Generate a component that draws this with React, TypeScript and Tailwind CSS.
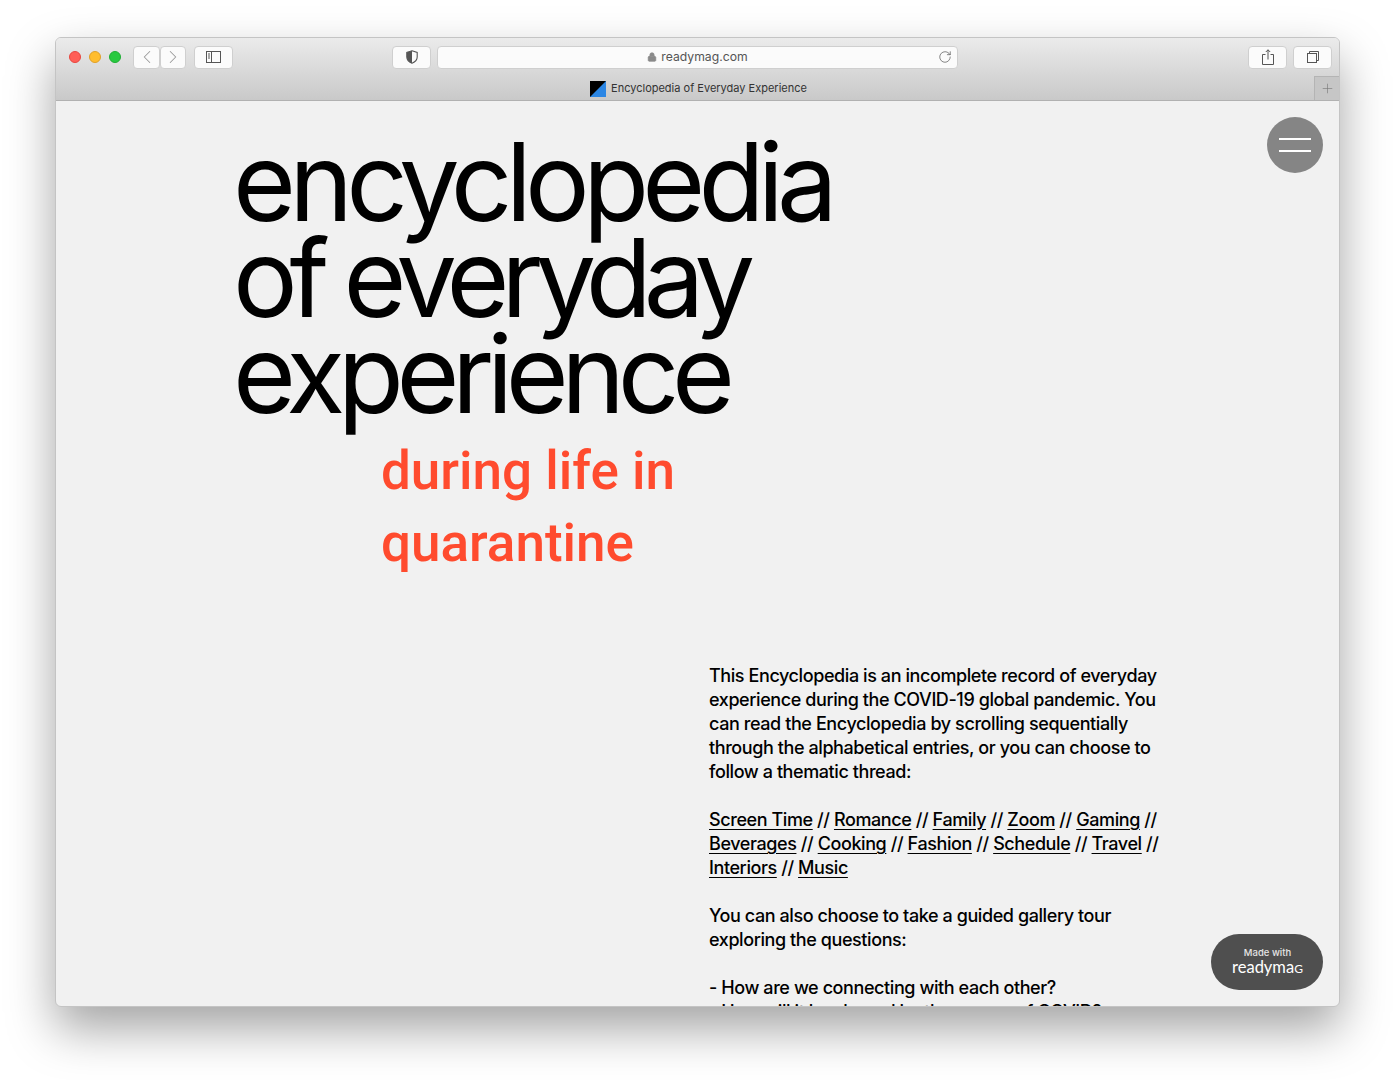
import { ChevronLeft, ChevronRight, Lock, Plus, RotateCw } from 'lucide-react'

const threads = [
  ['Screen Time', 'Romance', 'Family', 'Zoom', 'Gaming'],
  ['Beverages', 'Cooking', 'Fashion', 'Schedule', 'Travel'],
  ['Interiors', 'Music'],
]

function ToolButton({ className, children }: { className: string; children: React.ReactNode }) {
  return (
    <div className={`flex h-[23px] items-center justify-center rounded-[4px] border border-[#cfcfcf] bg-[#fbfbfb] ${className}`}>
      {children}
    </div>
  )
}

export default function App() {
  return (
    <div className="h-[1080px] overflow-hidden bg-white pl-[55px] pr-[55px] pt-[37px] font-['Inter',sans-serif]">
      <div className="flex h-[970px] flex-col overflow-hidden rounded-[6px] border border-[#c4c4c4] bg-[#f1f1f1] shadow-[0_22px_48px_rgba(0,0,0,0.36)]">
        {/* toolbar */}
        <div className="h-[63px] shrink-0 border-b border-[#b1b1b1] bg-gradient-to-b from-[#ebebeb] to-[#c9c9c9]">
          <div className="flex h-[38px] items-center pl-[13px] pr-[7px]">
            <div className="flex gap-[8px]">
              <span className="h-[12px] w-[12px] rounded-full border border-[#e8463f] bg-[#ff5f57]" />
              <span className="h-[12px] w-[12px] rounded-full border border-[#e0a028] bg-[#ffbd2e]" />
              <span className="h-[12px] w-[12px] rounded-full border border-[#1fae33] bg-[#28c940]" />
            </div>
            <ToolButton className="ml-[12px] w-[27px]">
              <ChevronLeft size={22} strokeWidth={1.1} className="text-[#9a9a9a]" />
            </ToolButton>
            <ToolButton className="w-[26px]">
              <ChevronRight size={22} strokeWidth={1.1} className="text-[#9a9a9a]" />
            </ToolButton>
            <ToolButton className="ml-[8px] w-[39px]">
              <svg width="15" height="12" viewBox="0 0 15 12" fill="none" stroke="#555" strokeWidth="1">
                <rect x="0.5" y="0.5" width="14" height="11" />
                <path d="M5.5 0.5v11M2 3h2M2 5h2M2 7h2" />
              </svg>
            </ToolButton>
            <ToolButton className="ml-[159px] w-[39px]">
              <svg width="12" height="14" viewBox="0 0 12 14">
                <path d="M6 0.8 11.2 2.4V7c0 3-2.2 5-5.2 6.2C3 12 0.8 10 0.8 7V2.4Z" fill="none" stroke="#555" strokeWidth="1.1" />
                <path d="M6 0.8V13.2C3 12 0.8 10 0.8 7V2.4Z" fill="#555" />
              </svg>
            </ToolButton>
            <ToolButton className="relative ml-[6px] w-[521px]">
              <div className="flex items-center gap-[4px] pt-[1px] text-[12.2px] text-[#555]">
                <Lock size={10} fill="#8a8a8a" className="text-[#8a8a8a]" />
                <span>readymag.com</span>
              </div>
              <RotateCw size={14} strokeWidth={1.2} className="absolute right-[5px] top-[3px] text-[#555]" />
            </ToolButton>
            <div className="flex-1" />
            <ToolButton className="w-[39px]">
              <svg width="12" height="16" viewBox="0 0 12 16" fill="none" stroke="#555" strokeWidth="1">
                <path d="M3.5 5.5H.5v10h11v-10H8.5M6 10.5V.8M3.8 3 6 .8 8.2 3" />
              </svg>
            </ToolButton>
            <ToolButton className="ml-[6px] w-[39px]">
              <svg width="12" height="12" viewBox="0 0 12 12" fill="none" stroke="#555" strokeWidth="1">
                <rect x="0.5" y="2.5" width="9" height="9" />
                <path d="M2.5 2.5V.5h9v9h-2" />
              </svg>
            </ToolButton>
          </div>
          <div className="flex h-[24px]">
            <div className="flex flex-1 items-center justify-center gap-[5px] pl-[27px] pt-[1px] text-[11px] text-[#333]">
              <svg width="16" height="16" viewBox="0 0 16 16" className="shrink-0">
                <rect width="16" height="16" fill="#2b86e4" />
                <path d="M0 0h16L0 16Z" fill="#000" />
              </svg>
              <span>Encyclopedia of Everyday Experience</span>
            </div>
            <div className="flex w-[25px] items-center justify-center border-l border-t border-[#b4b4b4] bg-[#c6c6c6]">
              <Plus size={15} strokeWidth={1} className="text-[#777]" />
            </div>
          </div>
        </div>

        {/* page */}
        <div className="relative min-h-0 flex-1 overflow-hidden pl-[177px]">
          <h1 className="pt-[33px] text-[108px] font-normal leading-[96px] text-black">
            <span className="block tracking-[-0.063em]">encyclopedia</span>
            <span className="block tracking-[-0.076em]">of everyday</span>
            <span className="block tracking-[-0.0685em]">experience</span>
          </h1>
          <div className="ml-[148px] mt-[13px] font-['Roboto',sans-serif] text-[53px] font-medium leading-[72px] text-[#ff4b2e]">
            during life in
            <br />
            quarantine
          </div>
          <div className="ml-[476px] mt-[85px] w-[470px] text-[18px] font-medium leading-[24px] tracking-[-0.023em] text-black">
            <p>
              This Encyclopedia is an incomplete record of everyday
              <br />
              experience during the COVID-19 global pandemic. You
              <br />
              can read the Encyclopedia by scrolling sequentially
              <br />
              through the alphabetical entries, or you can choose to
              <br />
              follow a thematic thread:
            </p>
            <p className="mt-[24px]">
              {threads.map((row, r) => (
                <span key={r} className="block">
                  {row.map((name, i) => (
                    <span key={name}>
                      <span className="underline underline-offset-[3px]">{name}</span>
                      {i < row.length - 1 || r < threads.length - 1 ? ' // ' : ''}
                    </span>
                  ))}
                </span>
              ))}
            </p>
            <p className="mt-[24px]">
              You can also choose to take a guided gallery tour
              <br />
              exploring the questions:
            </p>
            <p className="mt-[24px]">
              - How are we connecting with each other?
              <br />- How will it be shaped by the course of COVID?
            </p>
          </div>

          {/* menu button */}
          <div className="absolute right-[16px] top-[16px] flex h-[56px] w-[56px] flex-col items-center justify-center gap-[10px] rounded-full bg-[#858585]">
            <span className="h-[2px] w-[32px] bg-white" />
            <span className="h-[2px] w-[32px] bg-white" />
          </div>

          {/* made with badge */}
          <div className="absolute bottom-[16px] right-[16px] flex h-[56px] w-[112px] flex-col items-center justify-center rounded-[28px] bg-[#4f4f4f] pb-[2px] pl-[1px] text-white">
            <span className="text-[9.5px] font-medium leading-[12px] text-[#e6e6e6]">Made with</span>
            <span className="font-['Lato',sans-serif] text-[16.5px] leading-[17px]">
              readyma<span className="[font-variant:small-caps]">g</span>
            </span>
          </div>
        </div>
      </div>
    </div>
  )
}
